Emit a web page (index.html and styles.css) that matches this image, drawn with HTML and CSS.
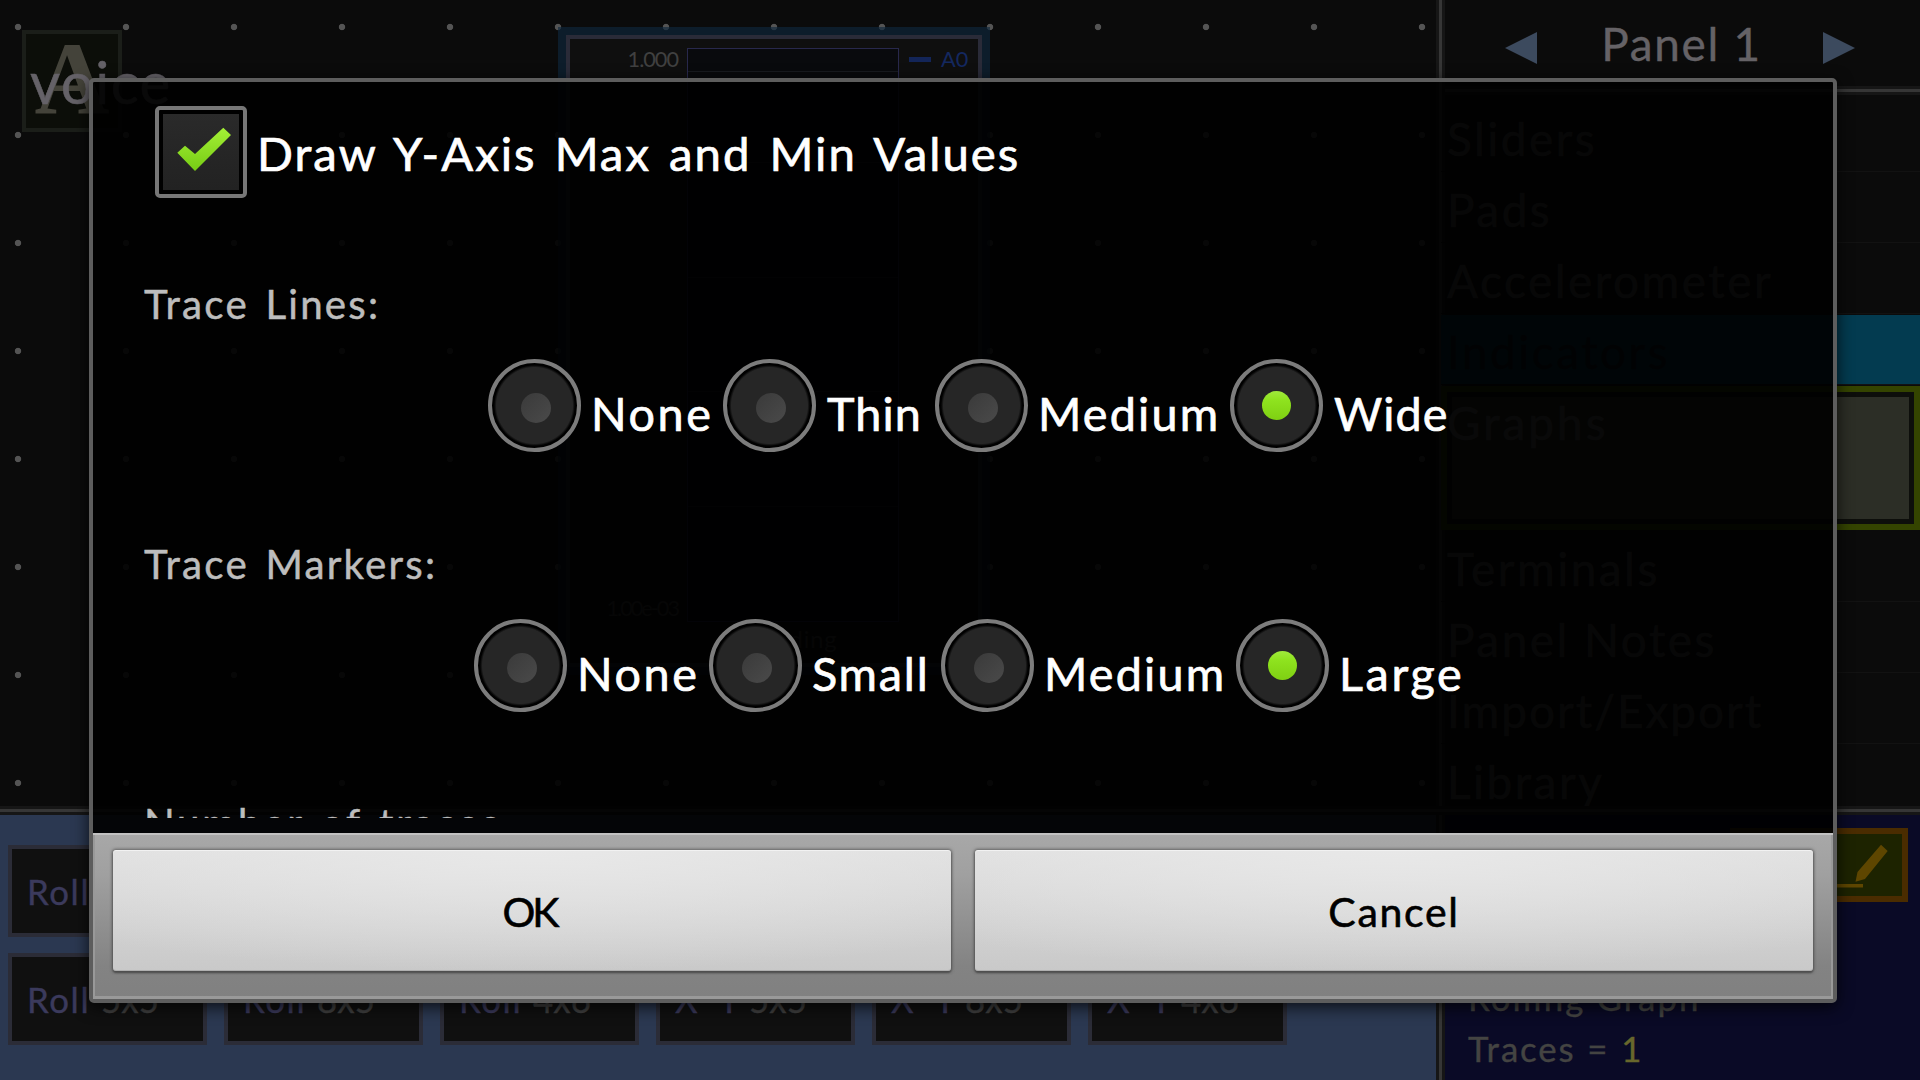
FILE: index.html
```html
<!DOCTYPE html>
<html lang="en">
<head>
<meta charset="utf-8">
<title>Panel 1</title>
<link rel="stylesheet" href="styles.css">
</head>
<body>
<div class="app">
  <main class="canvas">
    <div class="note-icon">A</div>
    <div class="voice">voice</div>
    <section class="graph">
      <div class="graph-frame">
        <div class="axis"><span>1.000</span><span class="axis-min">1.00e-03</span></div>
        <div class="plot-column">
          <div class="plot"><i></i><i></i><i></i><i></i><i></i></div>
          <div class="graph-title">Reading</div>
        </div>
        <div class="legend"><i></i>A0</div>
      </div>
    </section>
  </main>
  <aside class="sidebar">
    <header class="panel-header">
      <svg class="arrow" viewBox="0 0 32 32"><path d="M0 16L32 0V32Z"/></svg>
      <h1>Panel 1</h1>
      <svg class="arrow" viewBox="0 0 32 32"><path d="M32 16L0 0V32Z"/></svg>
    </header>
    <ul class="categories">
      <li>Sliders</li>
      <li>Pads</li>
      <li>Accelerometer</li>
      <li class="current">Indicators</li>
      <li class="selected"><div>Graphs</div></li>
      <li>Terminals</li>
      <li>Panel Notes</li>
      <li class="snug">Import/Export</li>
      <li class="last">Library</li>
    </ul>
  </aside>
  <section class="palette">
    <div class="tile"><span class="kind">Roll</span></div>
    <div class="tile first-in-row"><span class="kind">Roll</span><span>5x5</span></div>
    <div class="tile"><span class="kind">Roll</span><span>8x5</span></div>
    <div class="tile"><span class="kind">Roll</span><span>4x6</span></div>
    <div class="tile"><span class="kind xy">X Y</span><span>5x5</span></div>
    <div class="tile"><span class="kind xy">X Y</span><span>8x5</span></div>
    <div class="tile"><span class="kind xy">X Y</span><span>4x6</span></div>
  </section>
  <section class="info">
    <div class="edit">
      <svg viewBox="0 0 178 75"><path d="M151 16.7L157.7 23 135 51 125.5 53.7 127.5 44ZM90 56H133V59.5H90Z"/></svg>
    </div>
    <div class="details">
      <p class="type">Rolling Graph</p>
      <p class="traces">Traces = <b>1</b></p>
    </div>
  </section>
</div>

<div class="dialog">
  <div class="dialog-body">
    <div class="check-row">
      <span class="checkbox">
        <svg viewBox="0 0 92 92">
          <defs><linearGradient id="tick" x1="0" y1="0" x2="0" y2="1"><stop offset="0" stop-color="#a4ef36"/><stop offset="1" stop-color="#76cc14"/></linearGradient></defs>
          <path fill="url(#tick)" d="M22.3 46.7L30 39.7 40 48 68.3 21.7 76 29 40 65Z"/>
        </svg>
      </span>
      <span class="check-label">Draw Y-Axis Max and Min Values</span>
    </div>

    <h2>Trace Lines:</h2>
    <div class="options lines">
      <label><i class="radio"></i><span>None</span></label>
      <label><i class="radio"></i><span class="flush ls-1">Thin</span></label>
      <label><i class="radio"></i><span class="medium">Medium</span></label>
      <label><i class="radio on"></i><span class="flush ls-1">Wide</span></label>
    </div>

    <h2 class="markers-title">Trace Markers:</h2>
    <div class="options markers">
      <label><i class="radio"></i><span>None</span></label>
      <label><i class="radio"></i><span class="ls-2">Small</span></label>
      <label><i class="radio"></i><span class="medium">Medium</span></label>
      <label><i class="radio on"></i><span>Large</span></label>
    </div>

    <h2 class="count-title">Number of traces</h2>
  </div>
  <footer class="dialog-footer">
    <button class="ok">OK</button>
    <button>Cancel</button>
  </footer>
</div>
</body>
</html>
```
FILE: styles.css
```css
* { box-sizing: border-box; }

body {
  margin: 0;
  width: 1920px;
  height: 1080px;
  overflow: hidden;
  position: relative;
  background: #0b0b0b;
  font-family: Lato, "Open Sans", sans-serif;
}

h1, h2, p, ul { margin: 0; padding: 0; font-weight: 400; list-style: none; }

/* Editor behind the dialog */
.app {
  display: grid;
  grid-template-columns: 1436px 484px;
  grid-template-rows: 806px 274px;
  height: 1080px;
}

.canvas {
  position: relative;
  background: radial-gradient(circle at 18px 27px, #545454 2.8px, transparent 3.6px) 0 0 / 108px 108px;
}

.note-icon {
  position: absolute;
  left: 22px;
  top: 30px;
  width: 100px;
  height: 102px;
  border: 4px solid #1b1e19;
  background: #0c0e09;
  color: #44433a;
  font: 700 104px/89px "Liberation Serif", serif;
  text-align: center;
}

.voice {
  position: absolute;
  left: 30px;
  top: 46px;
  font-size: 58.4px;
  line-height: 70px;
  letter-spacing: 1.4px;
  color: #656268;
  -webkit-text-stroke: .5px;
}

.graph {
  position: absolute;
  left: 558px;
  top: 27px;
  width: 432px;
  height: 648px;
  padding: 8px;
  background: rgba(16, 40, 62, .65);
}

.graph-frame {
  display: flex;
  height: 100%;
  padding: 9px 0 0;
  border: 4px solid #2a2b38;
  background: #0f0f0f;
  color: #404040;
  font-size: 21.7px;
  line-height: 26px;
}

.axis {
  display: flex;
  flex-direction: column;
  justify-content: space-between;
  width: 117px;
  height: 575px;
  margin-top: -2px;
  padding: 0 9px 0 0;
  text-align: right;
  letter-spacing: -1px;
}
.axis-min { letter-spacing: -2px; }

.plot-column { width: 212px; }
.plot {
  display: flex;
  flex-direction: column;
  height: 574px;
  border: 1px solid #28284c;
  background: #090a0d;
}
.plot i { height: 114.6px; border-bottom: 1px solid #181a20; }
.plot i:first-child { background: linear-gradient(#181a20, #181a20) 0 22px / 100% 1px no-repeat; }
.plot i:last-child { border: 0; }
.graph-title { padding-top: 4px; text-align: center; font-size: 23.7px; letter-spacing: .9px; }

.legend { display: flex; height: 26px; margin: -4px 0 0 6px; color: #14285f; line-height: 30px; }
.legend i { width: 22px; height: 5px; margin: 13px 10px 0 4px; background: #132558; }

.sidebar {
  background: linear-gradient(to right, #161616 3px, #363636 3px, #363636 6px, #161616 6px, #161616 9px, #0b0b0b 9px);
}

.panel-header {
  display: flex;
  align-items: center;
  height: 95px;
  padding: 0 65px 9px 69px;
  background: linear-gradient(#161616 3px, #363636 3px, #363636 6px, #161616 6px) 9px 86px / 100% 9px no-repeat;
}
.panel-header h1 {
  flex: 1;
  padding: 1px 0 0 3px;
  text-align: center;
  font-size: 45.9px;
  line-height: 86px;
  letter-spacing: 1.7px;
  color: #656266;
  -webkit-text-stroke: .4px;
}
.arrow { width: 32px; height: 32px; margin-top: 9px; fill: #3c4a5e; }

.categories { margin: 0 0 0 5px; padding-top: 6px; }
.categories li {
  height: 71px;
  padding: 3px 0 0 6px;
  border-bottom: 1px solid #121212;
  font-size: 45.9px;
  line-height: 69px;
  letter-spacing: 2.5px;
  color: #545454;
  white-space: nowrap;
  -webkit-text-stroke: .5px;
}
.categories .snug { letter-spacing: 2px; }
.categories .current {
  background: linear-gradient(#033b50, #033b50) 0 1px / 100% 69px no-repeat;
  color: #101c24;
}
.categories .selected {
  height: 146px;
  padding: 7px 6px 6px;
  border: 0;
  background: linear-gradient(#344400, #344400) 0 1px / 100% 144px no-repeat;
}
.categories .selected div {
  height: 132px;
  padding: 0;
  border: 5px solid #0d0e0b;
  background: #2c2e26;
  line-height: 52px;
  text-indent: -5px;
  letter-spacing: 3px;
  color: #686868;
}
.categories .last { height: 62px; border: 0; }

.palette {
  display: grid;
  grid-template-columns: repeat(6, 199px);
  grid-auto-rows: 92px;
  gap: 16px 17px;
  padding: 39px 0 0 8px;
  background: linear-gradient(#161616 3px, #363636 3px, #363636 6px, #161616 6px, #161616 9px, #2b3851 9px);
}
.tile {
  display: flex;
  padding-left: 15px;
  border: 4px solid #2b2c37;
  background: #101010;
  color: #404040;
  font-size: 34.8px;
  line-height: 86px;
  letter-spacing: .1px;
  -webkit-text-stroke: .4px;
}
.tile .kind { width: 74px; letter-spacing: 1.6px; color: #3b3a5c; }
.tile .xy { word-spacing: 10px; }
.first-in-row { grid-column: 1; }

.info {
  display: flex;
  flex-direction: column;
  justify-content: space-between;
  padding: 22px 12px 6px 32px;
  background:
    linear-gradient(#161616 3px, #363636 3px, #363636 6px, #161616 6px) 0 0 / 100% 9px no-repeat,
    linear-gradient(to right, #161616 3px, #363636 3px, #363636 6px, #161616 6px, #161616 9px, #0a0a26 9px);
}
.edit {
  align-self: flex-end;
  width: 178px;
  height: 74px;
  border: 6px solid #4a2c00;
  background: #1d2300;
}
.edit svg { display: block; width: 178px; height: 75px; margin: -6px; fill: #5e4600; }
.details { color: #444442; font-size: 34.8px; line-height: 51px; -webkit-text-stroke: .4px; }
.type { letter-spacing: 2.1px; }
.traces { letter-spacing: 1.9px; word-spacing: 1px; }
.traces b { font-weight: 400; color: #68672c; }

/* Dialog */
.dialog {
  position: absolute;
  left: 89px;
  top: 78px;
  width: 1748px;
  height: 925px;
  display: flex;
  flex-direction: column;
  border: 4px solid #5d5d5d;
  border-radius: 5px;
  background: rgba(0, 0, 0, .91);
  background-clip: padding-box;
  box-shadow: 0 4px 16px rgba(0, 0, 0, .75);
  color: #fff;
}

.dialog-body { height: 736px; margin-bottom: 15px; padding: 24px 0 0 1px; overflow: hidden; }

.check-row { display: flex; align-items: center; gap: 10px; height: 92px; padding-left: 61px; }
.checkbox {
  width: 92px;
  height: 92px;
  border: 4px solid #777;
  border-radius: 5px;
  background: linear-gradient(#2a2a2a, #222) center / 76px 76px no-repeat #000;
}
.checkbox svg { display: block; width: 92px; height: 92px; margin: -4px; }
.check-label {
  font-size: 47.3px;
  letter-spacing: 2px;
  word-spacing: 4px;
  white-space: nowrap;
  -webkit-text-stroke: .7px;
}

.dialog-body h2 {
  margin: 81px 0 30px;
  padding-left: 50px;
  font-size: 40.3px;
  line-height: 50px;
  letter-spacing: 2.2px;
  word-spacing: 4px;
  color: #bdbdbd;
  -webkit-text-stroke: .5px;
}
.dialog-body .markers-title { margin-top: 87px; }
.dialog-body .count-title { margin-top: 86px; letter-spacing: 2.7px; }

.options { display: grid; height: 93px; }
.lines { grid-template-columns: 235px 212px 295px 240px; padding-left: 394px; }
.markers { grid-template-columns: 235px 232px 295px 240px; padding-left: 380px; }
.options label { display: flex; align-items: center; gap: 10px; }
.options span {
  padding-top: 15px;
  font-size: 46.7px;
  letter-spacing: 2.6px;
  white-space: nowrap;
  -webkit-text-stroke: .7px;
}
.options .ls-1 { letter-spacing: 1.1px; }
.options .ls-2 { letter-spacing: 1.8px; }
.options .flush { margin-left: 1px; }
.options .medium { letter-spacing: 2.2px; }

.radio {
  flex: none;
  display: grid;
  place-items: center;
  width: 93px;
  height: 93px;
  border: 4px solid #7c7c7c;
  border-radius: 50%;
  background: radial-gradient(circle, #262626 38px, #000 40.5px);
}
.radio::after {
  content: "";
  width: 30px;
  height: 30px;
  margin: 4px 0 0 3px;
  border-radius: 50%;
  background: linear-gradient(135deg, #3a3a3a, #4a4a4a);
}
.radio.on::after { width: 29px; height: 29px; margin: 0; background: linear-gradient(#a0ea3c, #8fe31f 30%, #7fd012); }

.dialog-footer {
  display: grid;
  grid-template-columns: 1fr 1fr;
  gap: 24px;
  height: 166px;
  padding: 17px 20px 28px 20px;
  background: linear-gradient(#a8a8a8, #a0a0a0 25%, #838383 80%, #808080);
  box-shadow: inset 0 2px #c2c2c2, inset 0 -3px #999, inset 2px 0 #999, inset -2px 0 #999;
}
.dialog-footer button {
  padding: 2px 0 0;
  border: 0;
  border-radius: 3px;
  background: radial-gradient(ellipse 80% 100% at 50% 0, #e8e8e8, rgba(232, 232, 232, 0)), linear-gradient(#dedede, #c9c9c9);
  box-shadow: 0 2px 2px #4e4e4e, 0 0 3px 1px rgba(70, 70, 70, .7), inset 0 1px #f2f2f2, inset 0 -1px #b0b0b0;
  color: #000;
  font: 41px Lato, sans-serif;
  letter-spacing: 1.7px;
  -webkit-text-stroke: .6px;
}
.dialog-footer .ok { padding-right: 5px; letter-spacing: -3px; }
```
